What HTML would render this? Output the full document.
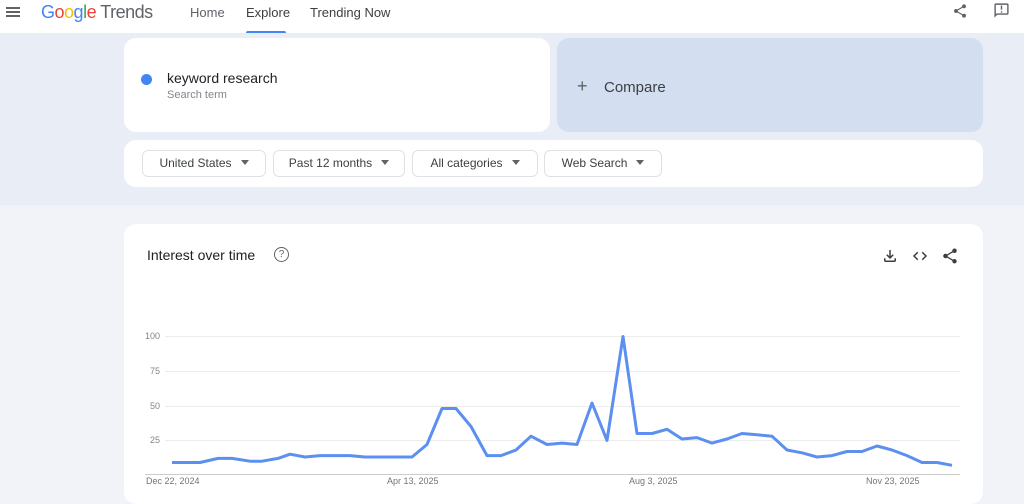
<!DOCTYPE html>
<html><head><meta charset="utf-8"><style>
*{box-sizing:border-box;margin:0;padding:0}
body{width:1024px;height:488px;overflow:hidden;font-family:"Liberation Sans",sans-serif;background:#f1f3f9;position:relative;color:#202124}
.hdr{position:absolute;left:0;top:0;width:1024px;height:33px;background:#fff}
.top{position:absolute;left:0;top:33px;width:1024px;height:172px;background:#e9eef6}
.card{position:absolute;background:#fff;border-radius:12px}
.chip{position:absolute;top:150px;height:27px;border:1px solid #dfe1e5;border-radius:6px;background:#fff;font-size:12px;color:#3c4043;line-height:25px;text-align:center}
.chip:after{content:"";display:inline-block;margin-left:9px;border-left:4px solid transparent;border-right:4px solid transparent;border-top:5px solid #5f6368;vertical-align:2px}
.yl{position:absolute;left:140px;width:20px;text-align:right;font-size:9px;color:#80868b}
.xl{position:absolute;top:476px;font-size:9px;color:#70757a}
</style></head><body>
<div class="hdr">
<div style="position:absolute;left:6px;top:7px;width:14px;height:2px;background:#5f6368;box-shadow:0 4px 0 #5f6368,0 8px 0 #5f6368"></div>
<div style="position:absolute;left:41px;top:2px;font-size:18px;letter-spacing:-0.5px"><span style="color:#4285f4">G</span><span style="color:#ea4335">o</span><span style="color:#fbbc05">o</span><span style="color:#4285f4">g</span><span style="color:#34a853">l</span><span style="color:#ea4335">e</span> <span style="color:#5f6368">Trends</span></div>
<div style="position:absolute;left:190px;top:5px;font-size:13px;color:#5f6368">Home</div>
<div style="position:absolute;left:246px;top:5px;font-size:13px;color:#3c4043">Explore</div>
<div style="position:absolute;left:246px;top:31px;width:40px;height:3px;background:#4285f4;border-radius:2px 2px 0 0"></div>
<div style="position:absolute;left:310px;top:5px;font-size:13px;color:#3c4043">Trending Now</div>
<svg style="position:absolute;left:952px;top:3px" width="16" height="16" viewBox="0 0 24 24"><path fill="#5f6368" d="M18 16.08c-.76 0-1.44.3-1.96.77L8.91 12.7c.05-.23.09-.46.09-.7s-.04-.47-.09-.7l7.05-4.11A2.99 2.99 0 0 0 21 5a3 3 0 1 0-5.91.7L8.04 9.81A3 3 0 1 0 6 15c.79 0 1.5-.31 2.04-.81l7.12 4.16c-.05.21-.08.43-.08.65A2.92 2.92 0 1 0 18 16.08z"/></svg>
<svg style="position:absolute;left:993px;top:2px" width="17" height="17" viewBox="0 0 24 24"><path fill="#5f6368" d="M20 2H4c-1.1 0-2 .9-2 2v18l4-4h14c1.1 0 2-.9 2-2V4c0-1.1-.9-2-2-2zm0 14H5.17L4 17.17V4h16v12zM11 5h2v6h-2zm0 8h2v2h-2z"/></svg>
</div>
<div class="top"></div>
<div class="card" style="left:124px;top:38px;width:426px;height:94px"></div>
<div style="position:absolute;left:141px;top:74px;width:11px;height:11px;border-radius:50%;background:#4285f4"></div>
<div style="position:absolute;left:167px;top:70px;font-size:14px">keyword research</div>
<div style="position:absolute;left:167px;top:89px;font-size:11px;color:#80868b">Search term</div>
<div style="position:absolute;left:557px;top:38px;width:426px;height:94px;border-radius:12px;background:#d3def0"></div>
<div style="position:absolute;left:577px;top:76px;font-size:18px;color:#5f6368">+</div>
<div style="position:absolute;left:604px;top:79px;font-size:15px;color:#3c4043">Compare</div>
<div class="card" style="left:124px;top:140px;width:859px;height:47px"></div>
<div class="chip" style="left:142px;width:124px">United States</div>
<div class="chip" style="left:273px;width:132px">Past 12 months</div>
<div class="chip" style="left:412px;width:126px">All categories</div>
<div class="chip" style="left:544px;width:118px">Web Search</div>
<div class="card" style="left:124px;top:224px;width:859px;height:280px"></div>
<div style="position:absolute;left:147px;top:247px;font-size:14px">Interest over time</div>
<div style="position:absolute;left:274px;top:247px;width:15px;height:15px;border:1.5px solid #5f6368;border-radius:50%;font-size:10px;text-align:center;line-height:13px;color:#5f6368">?</div>
<svg style="position:absolute;left:881px;top:247px" width="18" height="18" viewBox="0 0 24 24"><path fill="#3c4043" d="M18 15v3H6v-3H4v3c0 1.1.9 2 2 2h12c1.1 0 2-.9 2-2v-3h-2zm-1-4-1.41-1.41L13 12.17V4h-2v8.17L8.41 9.59 7 11l5 5 5-5z"/></svg>
<svg style="position:absolute;left:911px;top:247px" width="18" height="18" viewBox="0 0 24 24"><path fill="none" stroke="#3c4043" stroke-width="2" d="M9 7l-5 5 5 5M15 7l5 5-5 5"/></svg>
<svg style="position:absolute;left:941px;top:247px" width="18" height="18" viewBox="0 0 24 24"><path fill="#3c4043" d="M18 16.08c-.76 0-1.44.3-1.96.77L8.91 12.7c.05-.23.09-.46.09-.7s-.04-.47-.09-.7l7.05-4.11A2.99 2.99 0 0 0 21 5a3 3 0 1 0-5.91.7L8.04 9.810A3 3 0 1 0 6 15c.79 0 1.5-.31 2.04-.81l7.12 4.16c-.05.21-.08.43-.08.65A2.92 2.92 0 1 0 18 16.08z"/></svg>
<svg style="position:absolute;left:0;top:0" width="1024" height="488">
<g stroke="#ececec" stroke-width="1"><line x1="165" y1="336.5" x2="960" y2="336.5"/><line x1="165" y1="371.5" x2="960" y2="371.5"/><line x1="165" y1="406.5" x2="960" y2="406.5"/><line x1="165" y1="440.5" x2="960" y2="440.5"/></g>
<line x1="145" y1="474.5" x2="960" y2="474.5" stroke="#ccc"/>
<polyline fill="none" stroke="#5b8ff0" stroke-width="3" stroke-linejoin="round" points="172,462.5 200,462.5 218,458.4 232,458.4 250,461.2 262,461.2 278,458.4 290,454.2 305,457 320,455.6 335,455.6 350,455.6 365,457 380,457 395,457 412,457 427,444.5 442,408.5 456,408.5 471,426.5 487,455.6 501,455.6 516,450 531,436.2 547,444.5 562,443.1 577,444.5 592,403 607,440.4 623,336.5 637,433.5 652,433.5 667,429.3 682,439 697,437.6 712,443.1 727,439 742,433.5 757,434.8 772,436.2 787,450 802,452.8 817,457 832,455.6 847,451.5 862,451.5 877,446 892,450 907,455.6 922,462.5 937,462.5 952,465.3"/>
</svg>
<div class="yl" style="top:331px">100</div>
<div class="yl" style="top:366px">75</div>
<div class="yl" style="top:401px">50</div>
<div class="yl" style="top:435px">25</div>
<div class="xl" style="left:146px">Dec 22, 2024</div>
<div class="xl" style="left:387px">Apr 13, 2025</div>
<div class="xl" style="left:629px">Aug 3, 2025</div>
<div class="xl" style="left:866px">Nov 23, 2025</div>
</body></html>
